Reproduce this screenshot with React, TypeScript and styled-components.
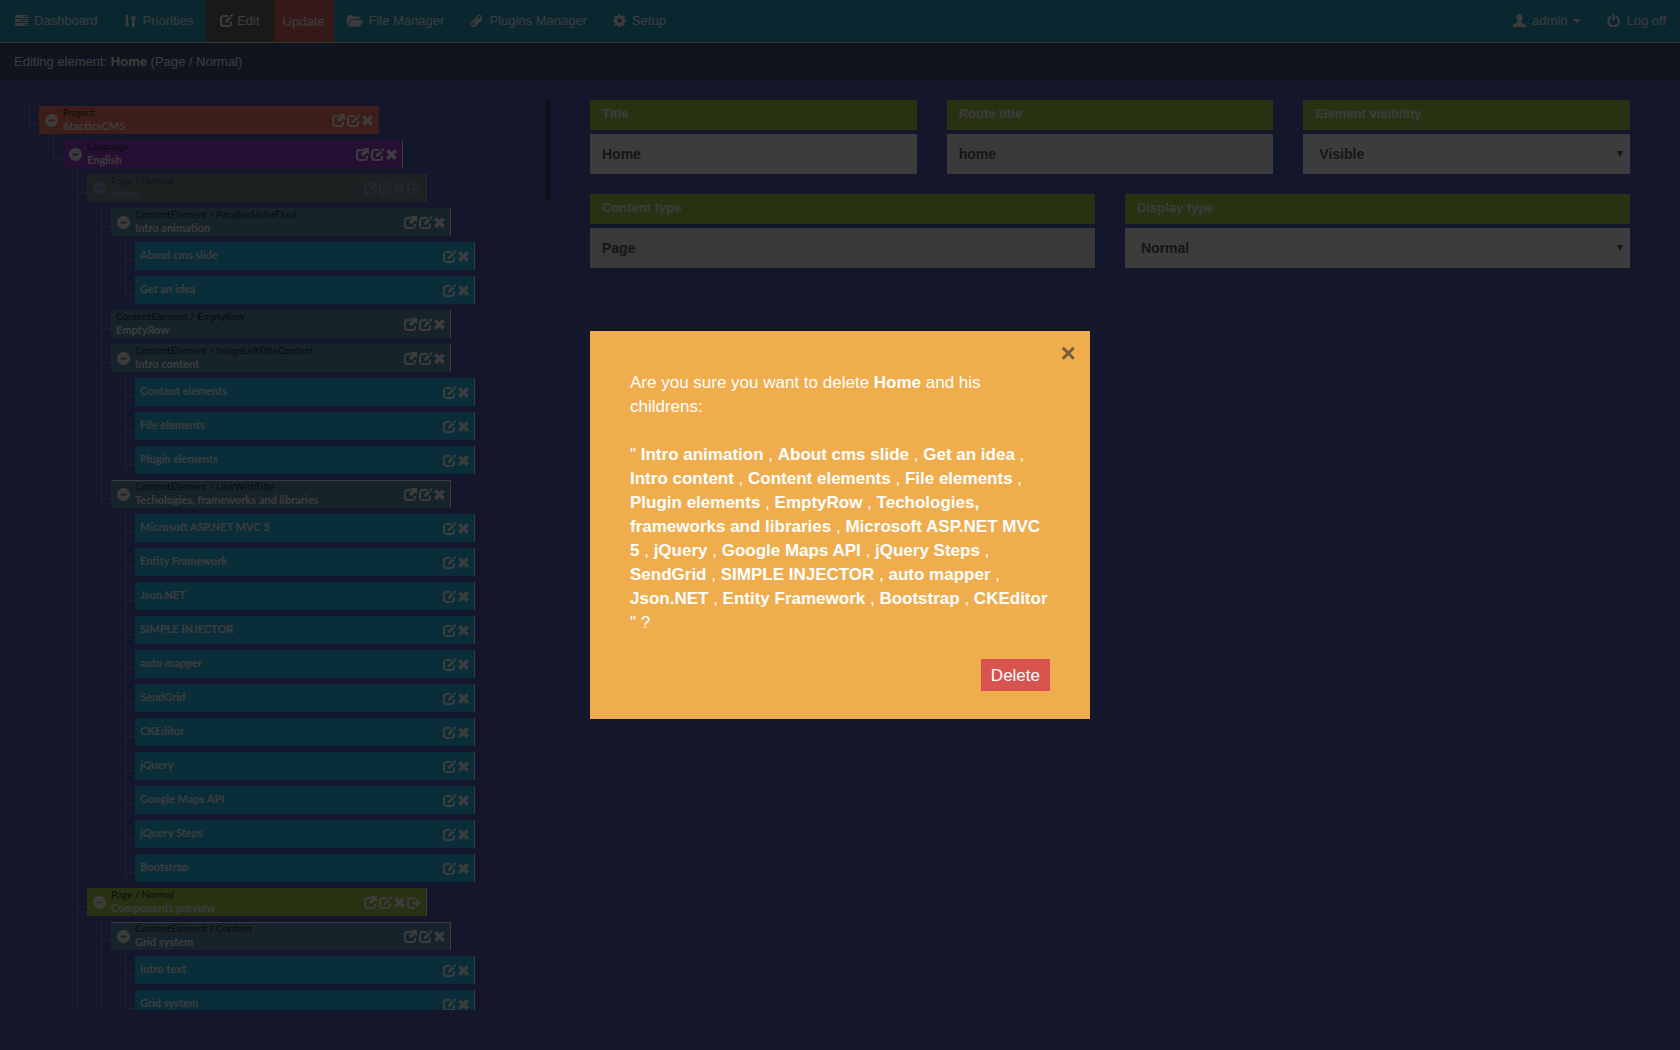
import React from "react";
import styled, { createGlobalStyle, css } from "styled-components";

const GlobalStyle = createGlobalStyle`
  *, *::before, *::after { box-sizing: border-box; }
  body {
    margin: 0;
    background: #3949ab;
    color: #fff;
    font-family: "Liberation Sans", Arial, sans-serif;
    font-size: 13px;
    line-height: 20px;
    overflow: hidden;
  }
  button, input, select { font: inherit; color: inherit; }
  ul { list-style: none; margin: 0; padding: 0; }
`;

/* ---------- icons ---------- */

const Svg = styled.svg`
  display: block;
  flex: none;
  width: ${(p: { $w?: number }) => p.$w ?? 13}px;
  height: 13px;
  fill: currentColor;
`;

type IconName =
  | "list" | "sort" | "edit" | "folder" | "clip" | "cog" | "user"
  | "off" | "open" | "remove" | "out" | "minus";

const frame = { fill: "none", stroke: "currentColor", strokeWidth: 2 };

const shapes: Record<IconName, React.ReactNode> = {
  list: (
    <path fillRule="evenodd" d="M1 1h11a1 1 0 0 1 1 1v2H0V2a1 1 0 0 1 1-1zM0 5h13v3H0zM0 9h13v2a1 1 0 0 1-1 1H1a1 1 0 0 1-1-1zM8 2v1h4V2zM5 6v1h7V6zM9 10v1h3v-1z" />
  ),
  sort: <path d="M2 1h2v8.500h2L3 13 0 9.500h2zM8 13V4.500H6L9.500 1 13 4.500h-2.500V13z" />,
  edit: (
    <>
      <path {...frame} d="M8 2H3.500A2.500 2.500 0 0 0 1 4.500v5A2.500 2.500 0 0 0 3.500 12h5A2.500 2.500 0 0 0 11 9.500V7.500" />
      <path d="M4.800 9.200l.5-2.700L9.400 2.400l1.900 1.900-4.100 4.100zM10.100 1.700l1.200-1.200a.8.8 0 0 1 1.100 0l.6.7a.8.8 0 0 1 0 1.100L12 3.500z" />
    </>
  ),
  open: (
    <>
      <path {...frame} d="M7 2H3.500A2.500 2.500 0 0 0 1 4.500v5A2.500 2.500 0 0 0 3.500 12h5A2.500 2.500 0 0 0 11 9.500V8" />
      <path d="M6.500 0H13v6.500l-2-2-3.700 3.700-2.500-2.500L8.500 2z" />
    </>
  ),
  out: (
    <>
      <path {...frame} d="M8 2H3.500A2.500 2.500 0 0 0 1 4.500v5A2.500 2.500 0 0 0 3.500 12H8" />
      <path d="M9 2.800L14 7l-5 4.200V8.500H5v-3h4z" />
    </>
  ),
  remove: <path d="M2.600 1.200L5.500 4.100l2.900-2.900 2.500 2.500L8 6.600l2.900 2.900L8.400 12 5.500 9.100 2.600 12 .1 9.500 3 6.600.1 3.700z" />,
  folder: <path d="M0 12V2.500L1.500 1h4L7 2.500h5.500V5H4L1 10zM4.500 6H16l-3 6.500H1z" />,
  clip: (
    <path
      fill="none"
      stroke="currentColor"
      strokeWidth="1.400"
      d="M8.800 4.200L4.500 8.500c-.9.9.2 2 1.100 1.100l5-5c1.900-1.900-.6-4.400-2.500-2.500L2.200 8c-2.400 2.400.9 5.800 3.400 3.400l6.300-6.300"
    />
  ),
  cog: (
    <path
      fillRule="evenodd"
      d="M5.400 0h2.200l.4 1.800 1 .4 1.600-1 1.500 1.500-1 1.600.4 1 1.500.4v2l-1.500.4-.4 1 1 1.600-1.500 1.500-1.600-1-1 .4-.4 1.600H5.400L5 11.600l-1-.4-1.600 1L.9 10.700l1-1.600-.4-1L0 7.700v-2l1.500-.4.4-1-1-1.600 1.500-1.500 1.600 1 1-.4zM6.500 4.400a2.300 2.300 0 1 0 0 4.600 2.300 2.300 0 0 0 0-4.600z"
    />
  ),
  user: <path d="M6.500 0C8.500 0 9.600 1.500 9.600 3.600c0 1.600-.6 2.900-1.500 3.700v1.200l3.900 1.700c.6.300 1 .8 1 1.400V13H0v-1.400c0-.6.4-1.100 1-1.400l3.900-1.700V7.300C4 6.500 3.400 5.200 3.400 3.600 3.400 1.500 4.500 0 6.500 0z" />,
  off: (
    <path
      fill="none"
      stroke="currentColor"
      strokeWidth="2"
      d="M4.200 2.300a5.300 5.300 0 1 0 4.600 0M6.500 0v6.500"
    />
  ),
  minus: <path fillRule="evenodd" d="M6.500 0a6.500 6.500 0 1 1 0 13 6.500 6.500 0 0 1 0-13zM3.500 5.600v1.800h6V5.600z" />,
};

const iconWidths: Partial<Record<IconName, number>> = { folder: 16, out: 14, remove: 11 };

const Icon = ({ name }: { name: IconName }) => {
  const w = iconWidths[name] ?? 13;
  return (
    <Svg $w={w} viewBox={`0 0 ${w} 13`} aria-hidden="true">
      {shapes[name]}
    </Svg>
  );
};

/* ---------- top bars ---------- */

const NavBar = styled.nav`
  display: flex;
  justify-content: space-between;
  height: 43px;
  padding: 0 1px 0 2px;
  background: #0894c4;
  border-bottom: 1px solid #dfe8c4;
`;

const NavGroup = styled.ul`
  display: flex;
`;

const NavLink = styled.a<{ $tone?: "active" | "danger" }>`
  display: flex;
  align-items: center;
  gap: 6px;
  height: 42px;
  padding: 0 13px 1px;
  color: #fff;
  text-decoration: none;
  ${(p) => p.$tone === "active" && css`background: #45535a; gap: 4px; padding: 0 14px 1px;`}
  ${(p) => p.$tone === "danger" && css`background: #d9534f; padding: 2px 9px 0;`}
`;

const Caret = styled.span`
  border: 4px solid transparent;
  border-top-color: currentColor;
  border-bottom: 0;
`;

const SubBar = styled.header`
  height: 38px;
  padding: 9px 14px;
  background: #263868;
`;

/* ---------- page ---------- */

const Columns = styled.main`
  display: grid;
  grid-template-columns: 1fr 2fr;
  padding-top: 19px;
`;

const TreePane = styled.section`
  display: flex;
  justify-content: space-between;
  height: calc(100vh - 140px);
  padding: 0 9px 0 15px;
  overflow: hidden;
`;

const Track = styled.div`
  width: 6px;
  background: #34439c;
  border-radius: 3px;
`;

const Thumb = styled.div`
  height: 100px;
  border-radius: 3px;
  background: #1a2660;
`;

const Branch = styled.ul`
  margin-left: 24px;
`;

const line = "#4c7d96";

const Node = styled.li<{ $continues?: boolean }>`
  position: relative;
  padding-top: 6px;

  &::before {
    content: "";
    position: absolute;
    top: 0;
    bottom: 0;
    left: -10px;
    border-left: 1px solid ${line};
  }
  ${(p) =>
    !p.$continues &&
    css`
      &:last-child::before {
        bottom: auto;
        height: 30px;
      }
    `}
  &::after {
    content: "";
    position: absolute;
    top: 24px;
    left: -10px;
    width: 10px;
    border-top: 1px solid ${line};
  }
`;

type Kind = "project" | "language" | "page" | "content" | "leaf";

const fills: Record<Kind, string> = {
  project: "#ff6347",
  language: "#8c26d4",
  page: "#9acd32",
  content: "#4682a8",
  leaf: "#00b8f0",
};

const Row = styled.div<{ $kind: Kind; $faded?: boolean; $ruled?: boolean }>`
  display: flex;
  align-items: center;
  width: 340px;
  height: 28px;
  padding: 0 5px;
  background: ${(p) => fills[p.$kind]};
  opacity: ${(p) => (p.$faded ? 0.4 : 1)};
  border-right: 1px solid ${(p) => (p.$kind === "project" ? fills.project : "#fff")};
  box-shadow: ${(p) => (p.$ruled ? "inset 0 1px #fff" : "none")};
  font-family: Lato, "Liberation Sans", sans-serif;
`;

const IconButton = styled.button`
  display: block;
  padding: 0;
  border: 0;
  background: none;
  cursor: pointer;
`;

const Toggle = styled(IconButton)`
  margin: 1px 5px 0 1px;
`;

const RowText = styled.div`
  flex: 1;
  height: 26px;
  align-self: flex-start;
  white-space: nowrap;
`;

const TypeLabel = styled.div`
  color: #000;
  font-size: 10px;
  line-height: 13px;
`;

const RowTitle = styled.div<{ $leaf?: boolean }>`
  font-size: 11px;
  font-weight: 700;
  line-height: 14px;
  padding-top: ${(p) => (p.$leaf ? 6 : 0)}px;
`;

const Actions = styled.div`
  display: flex;
  gap: 2px;
`;

type Item = {
  title: string;
  type?: string;
  kind: Kind;
  faded?: boolean;
  ruled?: boolean;
  continues?: boolean;
  items?: Item[];
};

const leaves = (...names: string[]): Item[] => names.map((title) => ({ title, kind: "leaf" }));

const tree: Item = {
  title: "6tacticsCMS",
  type: "Project",
  kind: "project",
  items: [
    {
      title: "English",
      type: "Language",
      kind: "language",
      items: [
        {
          title: "Home",
          type: "Page / Normal",
          kind: "page",
          faded: true,
          items: [
            {
              title: "Intro animation",
              type: "ContentElement / ParallaxSliderFluid",
              kind: "content",
              items: leaves("About cms slide", "Get an idea"),
            },
            { title: "EmptyRow", type: "ContentElement / EmptyRow", kind: "content" },
            {
              title: "Intro content",
              type: "ContentElement / ImageLeftTitleContent",
              kind: "content",
              items: leaves("Content elements", "File elements", "Plugin elements"),
            },
            {
              title: "Techologies, frameworks and libraries",
              type: "ContentElement / LinkWithTitle",
              kind: "content",
              ruled: true,
              items: leaves(
                "Microsoft ASP.NET MVC 5",
                "Entity Framework",
                "Json.NET",
                "SIMPLE INJECTOR",
                "auto mapper",
                "SendGrid",
                "CKEditor",
                "jQuery",
                "Google Maps API",
                "jQuery Steps",
                "Bootstrap"
              ),
            },
          ],
        },
        {
          title: "Components preview",
          type: "Page / Normal",
          kind: "page",
          continues: true,
          items: [
            {
              title: "Grid system",
              type: "ContentElement / Content",
              kind: "content",
              ruled: true,
              continues: true,
              items: leaves("Intro text", "Grid system"),
            },
          ],
        },
      ],
    },
  ],
};

const TreeNode = ({ item }: { item: Item }) => (
  <Node $continues={item.continues}>
    <Row $kind={item.kind} $faded={item.faded} $ruled={item.ruled}>
      {item.items && (
        <Toggle aria-label={`Collapse ${item.title}`}>
          <Icon name="minus" />
        </Toggle>
      )}
      <RowText>
        {item.type && <TypeLabel>{item.type}</TypeLabel>}
        <RowTitle $leaf={!item.type}>{item.title}</RowTitle>
      </RowText>
      <Actions>
        {item.type && (
          <IconButton aria-label="Open">
            <Icon name="open" />
          </IconButton>
        )}
        <IconButton aria-label="Edit">
          <Icon name="edit" />
        </IconButton>
        <IconButton aria-label="Delete">
          <Icon name="remove" />
        </IconButton>
        {item.kind === "page" && (
          <IconButton aria-label="Move">
            <Icon name="out" />
          </IconButton>
        )}
      </Actions>
    </Row>
    {item.items && (
      <Branch>
        {item.items.map((child) => (
          <TreeNode key={child.title} item={child} />
        ))}
      </Branch>
    )}
  </Node>
);

/* ---------- form ---------- */

const Form = styled.form`
  display: flex;
  flex-direction: column;
  gap: 20px;
  padding: 0 50px 0 30px;
`;

const FormRow = styled.div`
  display: grid;
  grid-auto-flow: column;
  grid-auto-columns: minmax(0, 1fr);
  gap: 30px;
`;

const Field = styled.div`
  display: flex;
  flex-direction: column;
  gap: 4px;
`;

const Label = styled.label`
  height: 30px;
  padding: 4px 12px;
  background: #9acd32;
  font-weight: 700;
`;

const control = css`
  display: block;
  width: 100%;
  height: 40px;
  border: 0;
  border-radius: 0;
  outline: 0;
  background: #fff;
  color: #444;
  font-size: 14px;
  font-weight: 700;
`;

const TextInput = styled.input`
  ${control}
  padding: 0 12px;
  &:read-only { background: #eee; }
`;

const SelectBox = styled.div`
  position: relative;
`;

const Select = styled.select`
  ${control}
  appearance: none;
  padding: 0 16px;
`;

const Arrow = styled.span`
  position: absolute;
  right: 7px;
  top: 17px;
  border: 3px solid transparent;
  border-top: 6px solid #333;
  border-bottom: 0;
  pointer-events: none;
`;

const TextField = ({ id, label, value, locked }: { id: string; label: string; value: string; locked?: boolean }) => (
  <Field>
    <Label htmlFor={id}>{label}</Label>
    <TextInput id={id} defaultValue={value} readOnly={locked} />
  </Field>
);

const SelectField = ({ id, label, value }: { id: string; label: string; value: string }) => (
  <Field>
    <Label htmlFor={id}>{label}</Label>
    <SelectBox>
      <Select id={id} defaultValue={value}>
        <option>{value}</option>
      </Select>
      <Arrow />
    </SelectBox>
  </Field>
);

/* ---------- dialog ---------- */

const Backdrop = styled.div`
  position: fixed;
  inset: 0;
  display: flex;
  align-items: center;
  justify-content: center;
  background: rgba(11, 11, 11, 0.8);
`;

const Dialog = styled.div`
  position: relative;
  width: 500px;
  padding: 40px 40px 28px;
  background: #f0ad4e;
  font-size: 17px;
  line-height: 24px;
`;

const Message = styled.p`
  margin: 0 0 24px;
`;

const Close = styled.button`
  position: absolute;
  top: 0;
  right: 0;
  width: 44px;
  height: 44px;
  padding: 0;
  border: 0;
  background: none;
  color: #333;
  opacity: 0.65;
  font-size: 26px;
  font-weight: 700;
  line-height: 44px;
  cursor: pointer;
`;

const DialogActions = styled.div`
  display: flex;
  justify-content: flex-end;
`;

const DeleteButton = styled.button`
  height: 32px;
  padding: 2px 10px 0;
  border: 0;
  background: #d9534f;
  color: #fff;
  cursor: pointer;
`;

const children = [
  "Intro animation", "About cms slide", "Get an idea", "Intro content", "Content elements",
  "File elements", "Plugin elements", "EmptyRow", "Techologies, frameworks and libraries",
  "Microsoft ASP.NET MVC 5", "jQuery", "Google Maps API", "jQuery Steps", "SendGrid",
  "SIMPLE INJECTOR", "auto mapper", "Json.NET", "Entity Framework", "Bootstrap", "CKEditor",
];

export default function App() {
  return (
    <>
      <GlobalStyle />
      <NavBar>
        <NavGroup>
          <li><NavLink href="#"><Icon name="list" />Dashboard</NavLink></li>
          <li><NavLink href="#"><Icon name="sort" />Priorities</NavLink></li>
          <li><NavLink href="#" $tone="active"><Icon name="edit" />Edit</NavLink></li>
          <li><NavLink href="#" $tone="danger">Update</NavLink></li>
          <li><NavLink href="#"><Icon name="folder" />File Manager</NavLink></li>
          <li><NavLink href="#"><Icon name="clip" />Plugins Manager</NavLink></li>
          <li><NavLink href="#"><Icon name="cog" />Setup</NavLink></li>
        </NavGroup>
        <NavGroup>
          <li><NavLink href="#"><Icon name="user" />admin<Caret /></NavLink></li>
          <li><NavLink href="#"><Icon name="off" />Log off</NavLink></li>
        </NavGroup>
      </NavBar>
      <SubBar>
        Editing element: <b>Home</b> (Page / Normal)
      </SubBar>
      <Columns>
        <TreePane>
          <Branch>
            <TreeNode item={tree} />
          </Branch>
          <Track>
            <Thumb />
          </Track>
        </TreePane>
        <Form>
          <FormRow>
            <TextField id="title" label="Title" value="Home" />
            <TextField id="route" label="Route title" value="home" locked />
            <SelectField id="visibility" label="Element visibility" value="Visible" />
          </FormRow>
          <FormRow>
            <TextField id="content" label="Content type" value="Page" locked />
            <SelectField id="display" label="Display type" value="Normal" />
          </FormRow>
        </Form>
      </Columns>
      <Backdrop>
        <Dialog role="dialog" aria-modal="true" aria-label="Delete element">
          <Close aria-label="Close">×</Close>
          <Message>
            Are you sure you want to delete <b>Home</b> and his childrens:
            <br />
            <br />
            {'" '}
            {children.map((name, i) => (
              <React.Fragment key={name}>
                {i > 0 && " , "}
                <b>{name}</b>
              </React.Fragment>
            ))}
            {' " ?'}
          </Message>
          <DialogActions>
            <DeleteButton>Delete</DeleteButton>
          </DialogActions>
        </Dialog>
      </Backdrop>
    </>
  );
}
